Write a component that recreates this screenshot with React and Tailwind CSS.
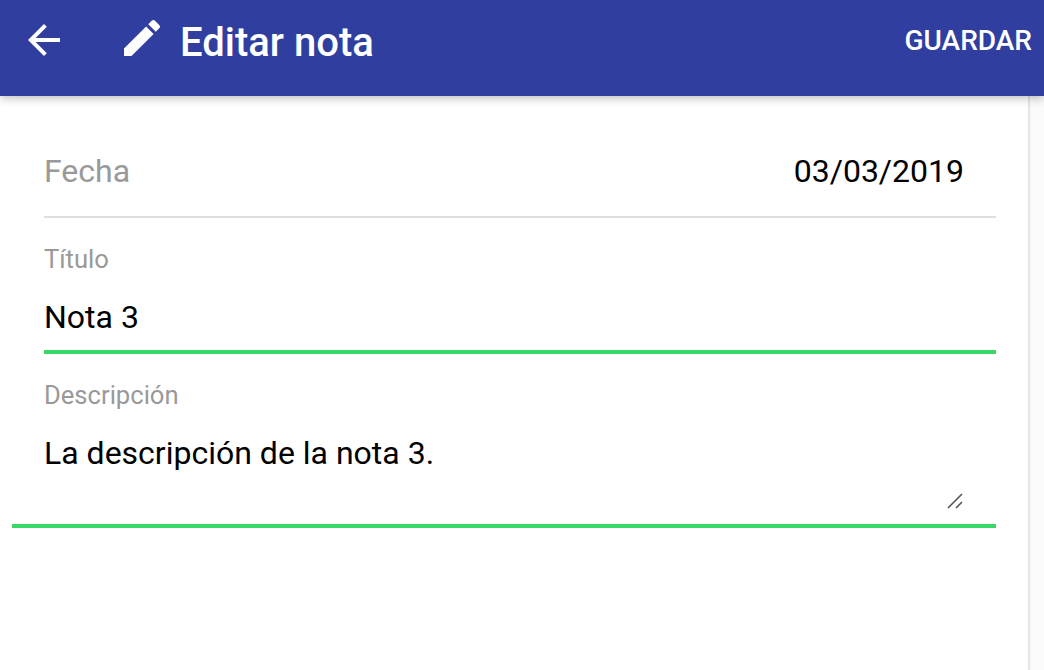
function ArrowBack() {
  return (
    <svg viewBox="0 0 24 24" className="size-12 fill-white" aria-hidden="true">
      <path d="M20 11H7.83l5.59-5.59L12 4l-8 8 8 8 1.41-1.41L7.83 13H20v-2z" />
    </svg>
  );
}

function Pencil() {
  return (
    <svg viewBox="0 0 24 24" className="-mt-0.5 ml-[50px] size-12 fill-white" aria-hidden="true">
      <path d="M3 17.25V21h3.75L17.81 9.94l-3.75-3.75L3 17.25zM20.71 7.04c.39-.39.39-1.02 0-1.41l-2.34-2.34c-.39-.39-1.02-.39-1.41 0l-1.83 1.83 3.75 3.75 1.83-1.83z" />
    </svg>
  );
}

function ResizeGrip() {
  return (
    <svg viewBox="0 0 16 16" className="size-4 stroke-[#555]" strokeWidth="1.6" aria-hidden="true">
      <path d="M1 15L15 1M9 15l6-6" />
    </svg>
  );
}

export default function App() {
  return (
    <div className="flex h-[670px] w-[1044px] flex-col overflow-hidden bg-[#fafafa] font-['Roboto',sans-serif] text-black">
      <header className="z-10 flex h-24 shrink-0 items-start bg-[#303f9f] pt-4 pr-3 pl-5 text-white shadow-[0_2px_9px_rgba(0,0,0,0.27)]">
        <ArrowBack />
        <Pencil />
        <h1 className="ml-3.5 text-[40px] leading-[54px] font-medium">Editar nota</h1>
        <button className="ml-auto text-[28px] leading-[50px] font-medium">GUARDAR</button>
      </header>
      <main className="w-[1030px] grow border-r-2 border-[#e5e5e5] bg-white pr-8 pl-3">
        <div className="ml-8 flex h-[122px] items-start justify-between border-b-2 border-[#dedede] pt-[55px] pr-8 text-[32px] leading-10">
          <span className="text-[#999]">Fecha</span>
          <span>03/03/2019</span>
        </div>
        <div className="ml-8 h-[136px] border-b-4 border-[#38d868] pt-[25px]">
          <div className="text-[25.6px] leading-8 text-[#999]">Título</div>
          <div className="mt-[22px] text-[32px] leading-10">Nota 3</div>
        </div>
        <div className="flex h-[174px] flex-col border-b-4 border-[#38d868] pt-[25px] pr-8 pl-8">
          <div className="text-[25.6px] leading-8 text-[#999]">Descripción</div>
          <div className="mt-[22px] text-[32px] leading-10">La descripción de la nota 3.</div>
          <div className="mt-5 flex justify-end pr-px">
            <ResizeGrip />
          </div>
        </div>
      </main>
    </div>
  );
}
